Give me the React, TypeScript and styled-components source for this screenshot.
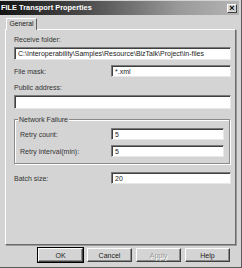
import styled, { createGlobalStyle } from "styled-components";

const Global = createGlobalStyle`
  html, body {
    margin: 0;
    padding: 0;
    background: #d4d4d4;
  }
  * {
    box-sizing: border-box;
  }
`;

export default function App() {
  return (
    <>
      <Global />
      <Window>
        <TitleBar>
          <Title>FILE Transport Properties</Title>
          <CloseButton>×</CloseButton>
        </TitleBar>

        <Tabs>
          <Tab>General</Tab>
        </Tabs>

        <Panel>
          <Label>Receive folder:</Label>
          <Input value="C:\Interoperability\Samples\Resource\BizTalk\Project\in-files" height={13} />

          <Row top={5}>
            <Label>File mask:</Label>
            <Input value="*.xml" height={12} />
          </Row>

          <Label top={6}>Public address:</Label>
          <Input value="" height={14} />

          <Group>
            <Legend>Network Failure</Legend>
            <GroupRow>
              <Label>Retry count:</Label>
              <Input value="5" height={12} />
            </GroupRow>
            <GroupRow top={5}>
              <Label>Retry interval(min):</Label>
              <Input value="5" height={12} />
            </GroupRow>
          </Group>

          <Row top={8}>
            <Label>Batch size:</Label>
            <Input value="20" height={12} />
          </Row>
        </Panel>

        <ButtonBar>
          <Button primary>OK</Button>
          <Button>Cancel</Button>
          <Button disabled>Apply</Button>
          <Button>Help</Button>
        </ButtonBar>
      </Window>
    </>
  );
}

function Input({ value, height }: { value: string; height: number }) {
  return (
    <Field height={height}>
      <span>{value}</span>
    </Field>
  );
}

const Window = styled.div`
  width: 242px;
  height: 268px;
  padding: 1px 2px 0 0;
  background: #d4d4d4;
  border-right: 1px solid #5a5a5a;
  border-bottom: 1px solid #5a5a5a;
  font-family: "Liberation Sans", Arial, sans-serif;
  display: flex;
  flex-direction: column;
  overflow: hidden;
`;

const TitleBar = styled.div`
  height: 14px;
  flex: none;
  display: flex;
  align-items: center;
  justify-content: space-between;
  padding: 0 2px 0 1px;
  background: linear-gradient(to right, #141414 0%, #4a4a4a 35%, #9a9a9a 75%, #b4b4b4 100%);
`;

const Title = styled.span`
  color: #fff;
  font-weight: bold;
  font-size: 7.4px;
  line-height: 14px;
`;

const CloseButton = styled.span`
  width: 10px;
  height: 9px;
  background: #d4d4d4;
  border-top: 1px solid #fff;
  border-left: 1px solid #fff;
  border-right: 1px solid #404040;
  border-bottom: 1px solid #404040;
  font-size: 9px;
  font-weight: bold;
  line-height: 6px;
  text-align: center;
  color: #000;
`;

const Tabs = styled.div`
  display: flex;
  flex: none;
  padding: 3px 0 0 6px;
  height: 15px;
`;

const Tab = styled.div`
  width: 31px;
  height: 12px;
  border-top: 1px solid #fff;
  border-left: 1px solid #fff;
  border-right: 1px solid #606060;
  font-size: 6.8px;
  line-height: 10px;
  text-align: center;
  color: #222;
  position: relative;
  z-index: 1;
  background: #d4d4d4;
`;

const Panel = styled.div`
  flex: none;
  margin: -1px 0 0 5px;
  width: 231px;
  height: 216px;
  border-top: 1px solid #fff;
  border-left: 1px solid #fff;
  border-right: 1px solid #6a6a6a;
  border-bottom: 1px solid #6a6a6a;
  box-shadow: 1px 1px 0 #9a9a9a;
  padding: 5px 4px 0 8px;
  display: flex;
  flex-direction: column;
`;

const Label = styled.div<{ top?: number }>`
  margin-top: ${(p) => p.top ?? 0}px;
  font-size: 7px;
  line-height: 9px;
  height: 9px;
  margin-bottom: 3px;
  color: #333;
  white-space: nowrap;
`;

const Field = styled.div<{ height: number }>`
  flex: none;
  height: ${(p) => p.height}px;
  background: #fff;
  border-top: 1px solid #7a7a7a;
  border-left: 1px solid #7a7a7a;
  border-right: 1px solid #e8e8e8;
  border-bottom: 1px solid #e8e8e8;
  box-shadow: inset 1px 1px 0 #404040;
  padding: 0 3px;
  display: flex;
  align-items: center;
  font-size: 7px;
  color: #222;
  white-space: nowrap;
  overflow: hidden;
`;

const Row = styled.div<{ top?: number }>`
  margin-top: ${(p) => p.top ?? 0}px;
  display: grid;
  grid-template-columns: 97px 1fr;
  align-items: center;

  & > ${Label} {
    margin: 0;
  }
`;

const Group = styled.div`
  position: relative;
  margin: 10px 1px 0 0;
  padding: 8px 5px 6px 5px;
  border: 1px solid #8a8a8a;
  box-shadow: 1px 1px 0 #fff, inset 1px 1px 0 #fff;
`;

const Legend = styled.span`
  position: absolute;
  top: -5px;
  left: 3px;
  font-size: 7px;
  line-height: 9px;
  padding: 0 1px;
  color: #333;
  background: #d4d4d4;
`;

const GroupRow = styled(Row)`
  grid-template-columns: 91px 1fr;
`;

const ButtonBar = styled.div`
  display: flex;
  justify-content: flex-end;
  gap: 4px;
  padding: 3px 9px 0 0;
`;

const Button = styled.button<{ primary?: boolean }>`
  width: 45px;
  height: 14px;
  padding: 0;
  background: #d4d4d4;
  font-family: "Liberation Sans", Arial, sans-serif;
  font-size: 7px;
  color: ${(p) => (p.disabled ? "#9a9a9a" : "#222")};
  text-shadow: ${(p) => (p.disabled ? "1px 1px 0 #fff" : "none")};
  border-top: 1px solid #fff;
  border-left: 1px solid #fff;
  border-right: 1px solid #404040;
  border-bottom: 1px solid #404040;
  box-shadow: inset -1px -1px 0 #8a8a8a;
  outline: ${(p) => (p.primary ? "1px solid #000" : "none")};
  outline-offset: 0;
`;
